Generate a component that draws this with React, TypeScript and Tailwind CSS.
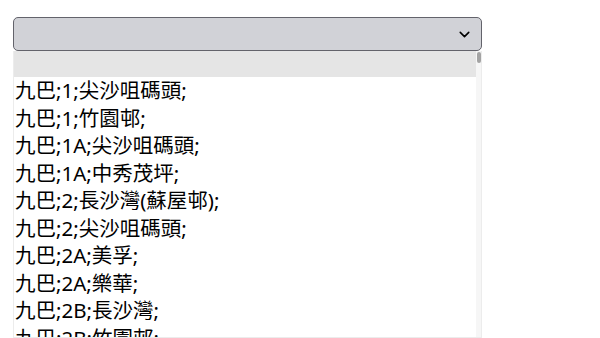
import { ChevronDown } from "lucide-react";

const routes = [
  "九巴;1;尖沙咀碼頭;",
  "九巴;1;竹園邨;",
  "九巴;1A;尖沙咀碼頭;",
  "九巴;1A;中秀茂坪;",
  "九巴;2;長沙灣(蘇屋邨);",
  "九巴;2;尖沙咀碼頭;",
  "九巴;2A;美孚;",
  "九巴;2A;樂華;",
  "九巴;2B;長沙灣;",
  "九巴;2B;竹園邨;",
];

export default function App() {
  return (
    <div
      className="h-[338px] w-[600px] overflow-hidden bg-white pl-[13px] pt-[17px]"
      style={{ fontFamily: '"Noto Sans", "Noto Sans CJK TC", sans-serif' }}
    >
      <div className="flex h-[34px] w-[469px] items-center justify-end rounded-[5px] border-[1.5px] border-[#63636b] bg-[#d1d2d7] pr-[8px]">
        <ChevronDown size={17} strokeWidth={2.2} className="text-black" />
      </div>
      <div className="flex h-[287px] w-[469px] border-x border-b border-[#ececec] bg-white">
        <div className="flex-1 overflow-hidden">
          <div className="h-[26px] bg-[#e5e5e5]" />
          {routes.map((r) => (
            <div
              key={r}
              className="h-[27.5px] pl-[1px] text-[20.5px] leading-[27.5px] text-black whitespace-nowrap"
            >
              {r}
            </div>
          ))}
        </div>
        <div className="w-[5px] bg-[#f6f6f6]">
          <div className="mx-auto mt-[1px] h-[11px] w-[4px] rounded-full bg-[#a3a3a3]" />
        </div>
      </div>
    </div>
  );
}
